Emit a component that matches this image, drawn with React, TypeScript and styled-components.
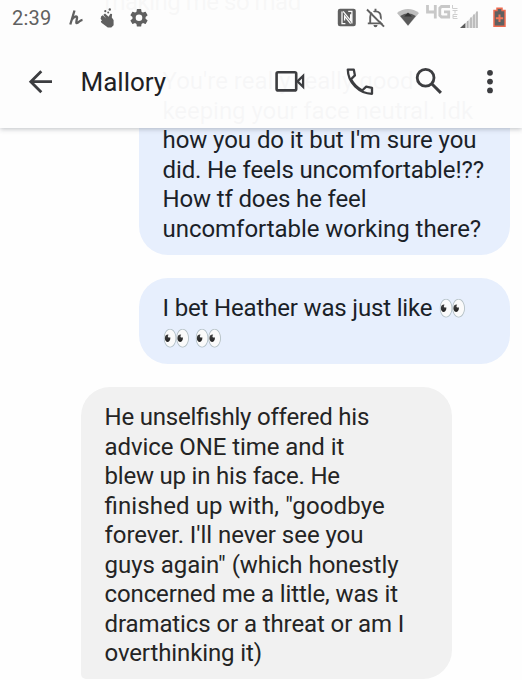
import React from 'react';
import styled, { createGlobalStyle } from 'styled-components';

const GlobalStyle = createGlobalStyle`
  *, *::before, *::after { box-sizing: border-box; }
  body { margin: 0; background: #fefefe; font-family: Roboto, sans-serif; }
`;

const Screen = styled.main`
  position: relative;
  width: 522px;
  height: 680px;
  overflow: hidden;
  background: #fefefe;
`;

const TopBar = styled.header`
  position: absolute;
  inset: 0 0 auto 0;
  height: 127.5px;
  background: rgba(253, 253, 253, 0.972);
  box-shadow: 0 1px 5px rgba(40, 45, 60, 0.3);
`;

const StatusBar = styled.div`
  display: flex;
  justify-content: space-between;
  height: 36px;
  padding: 0 16.5px 0 12px;
  color: #606060;
`;

const StatusGroup = styled.div`
  display: flex;
  align-items: center;
`;

const Clock = styled.time`
  width: 55px;
  font-size: 20px;
  letter-spacing: 0.2px;
  line-height: 36px;
`;

const StatusIcon = styled.svg<{ $w: number; $gap?: number }>`
  display: block;
  width: ${p => p.$w}px;
  height: 36px;
  margin-left: ${p => p.$gap ?? 0}px;
  fill: currentColor;
  overflow: visible;
`;

const AppBar = styled.div`
  display: flex;
  align-items: center;
  height: 91px;
  padding: 0 14px 0 22px;
  color: #3c3d40;
`;

const Title = styled.h1`
  flex: 1;
  margin: 0 0 0 22.5px;
  font-size: 26px;
  font-weight: 400;
  letter-spacing: 0;
  line-height: 36px;
  color: #202124;
`;

const IconButton = styled.button`
  width: 36px;
  height: 36px;
  padding: 0;
  border: 0;
  background: none;
  color: inherit;
`;

const Actions = styled.div`
  display: grid;
  grid-template-columns: 70px 69px 61px 36px;
`;

const Glyph = styled.svg`
  display: block;
  width: 36px;
  height: 36px;
  fill: none;
  stroke: currentColor;
  stroke-width: 2.8;
`;

const Conversation = styled.section`
  display: flex;
  flex-direction: column;
  gap: 23.6px;
  margin-top: -28px;
  padding: 0 12px 0 81px;
`;

const Bubble = styled.article<{ $sent?: boolean }>`
  flex: none;
  width: 371px;
  align-self: ${p => (p.$sent ? 'flex-end' : 'flex-start')};
  padding: 16px 0 10.4px 23.5px;
  border-radius: ${p => (p.$sent ? '29px' : '29px 29px 29px 5px')};
  background: ${p => (p.$sent ? '#e7effd' : '#f1f1f1')};
  color: ${p => (p.$sent ? '#1b1f28' : '#242424')};
`;

const Line = styled.span<{ $track?: number }>`
  display: block;
  height: 29.5px;
  font-size: 24px;
  line-height: 29.5px;
  white-space: pre;
  letter-spacing: ${p => p.$track ?? 0}px;
  font-feature-settings: 'liga' 1;
`;

const Emoji = styled.span`
  display: inline-block;
  width: 26px;
  margin-right: 5.5px;
  font-family: 'Noto Color Emoji', sans-serif;
  font-size: 23px;
  line-height: 1;
  letter-spacing: 0;
`;

type TextLine = { text: string; track?: number; eyes?: number };
type Message = { sent?: boolean; lines: TextLine[] };

const messages: Message[] = [
  { lines: [{ text: 'making me so mad', track: -0.5 }] },
  {
    sent: true,
    lines: [
      { text: "You're really really good" },
      { text: 'keeping your face neutral. Idk', track: -0.06 },
      { text: "how you do it but I'm sure you", track: -0.07 },
      { text: 'did. He feels uncomfortable!??', track: -0.12 },
      { text: 'How tf does he feel', track: -0.14 },
      { text: 'uncomfortable working there?', track: -0.04 },
    ],
  },
  {
    sent: true,
    lines: [
      { text: 'I bet Heather was just like ', track: -0.16, eyes: 1 },
      { text: '', eyes: 2 },
    ],
  },
  {
    lines: [
      { text: 'He unselfishly offered his', track: -0.2 },
      { text: 'advice ONE time and it', track: -0.08 },
      { text: 'blew up in his face. He', track: -0.2 },
      { text: 'finished up with, "goodbye', track: 0.13 },
      { text: "forever. I'll never see you", track: -0.04 },
      { text: 'guys again" (which honestly', track: -0.03 },
      { text: 'concerned me a little, was it', track: -0.12 },
      { text: 'dramatics or a threat or am I', track: -0.1 },
      { text: 'overthinking it)', track: -0.12 },
    ],
  },
];

function LeftStatus() {
  return (
    <StatusGroup>
      <Clock>2:39</Clock>
      <StatusIcon $w={16} $gap={1} viewBox="0 0 16 36">
        <path d="M6.5 10.5 2.3 24.5M3.5 20.2C5.5 16.5 9.8 14.8 9 18.3 8.2 22 7.6 24.2 10 22.6 11.6 21.5 12 20.2 14.5 19.8" fill="none" stroke="currentColor" strokeWidth="2.3" />
      </StatusIcon>
      <StatusIcon $w={15} $gap={16} viewBox="0 0 15 36">
        <path d="M1.2 16.2 2.8 15.2 6.1 18.4 3.4 14.7 5 13.4 8.6 16.8 10.3 13.8 12.1 14.1 11.8 17.5 13.6 20.1V25.3L11.3 27.5H7.8L1.4 22.8.8 21.2 2 20.4.6 18.7Z" />
        <circle cx="5.3" cy="11.2" r="1.1" /><circle cx="8.2" cy="12.6" r="1" /><circle cx="9.8" cy="9.5" r="1.2" />
      </StatusIcon>
      <StatusIcon $w={22} $gap={12.5} viewBox="0 -7.4 24 39.2">
        <path d="M19.14 12.94c.04-.3.06-.61.06-.94s-.02-.64-.07-.94l2.03-1.58a.49.49 0 0 0 .12-.61l-1.92-3.32a.49.49 0 0 0-.59-.22l-2.39.96a7 7 0 0 0-1.62-.94l-.36-2.54a.48.48 0 0 0-.48-.41h-3.84a.48.48 0 0 0-.47.41l-.36 2.54c-.59.24-1.13.57-1.62.94l-2.39-.96a.48.48 0 0 0-.59.22L2.74 8.87a.48.48 0 0 0 .12.61l2.03 1.58a7.5 7.5 0 0 0 0 1.88l-2.03 1.58a.49.49 0 0 0-.12.61l1.92 3.32c.12.22.37.29.59.22l2.39-.96c.5.38 1.03.7 1.62.94l.36 2.54c.05.24.24.41.48.41h3.84c.24 0 .44-.17.47-.41l.36-2.54c.59-.24 1.13-.56 1.62-.94l2.39.96c.22.08.47 0 .59-.22l1.92-3.32a.48.48 0 0 0-.12-.61zM12 15.6a3.6 3.6 0 1 1 0-7.2 3.6 3.6 0 0 1 0 7.2z" />
      </StatusIcon>
    </StatusGroup>
  );
}

function RightStatus() {
  return (
    <StatusGroup>
      <StatusIcon $w={18} viewBox="0 0 18 36">
        <rect x="-.2" y="8.7" width="18" height="17.6" rx="2.2" />
        <path d="M7.4 23.6H4V11.4M5.2 11.4 12.6 20.6V14.2M10.2 11.4H13.9V23.6M12.6 23.6 6.6 16V20.6" fill="none" stroke="#fdfdfd" strokeWidth="1.25" />
      </StatusIcon>
      <StatusIcon $w={19} $gap={9.5} viewBox="0 0 19 36">
        <path d="M4.2 23.2V17C4.2 13.3 6.4 11.4 9.5 11.4S14.8 13.3 14.8 17V23.2M1.8 23.4H17M9.5 8.7V12" fill="none" stroke="currentColor" strokeWidth="1.9" />
        <path d="M7.4 25H11.6Q11.3 27.2 9.5 27.2T7.4 25" />
        <path d="M3 8.5 19.2 24.9" stroke="#fff" strokeWidth="1.8" />
        <path d="M1 9.5 18 26.7" stroke="currentColor" strokeWidth="1.9" />
      </StatusIcon>
      <StatusIcon $w={22} $gap={12.5} viewBox="0 0 22 36">
        <path d="M0 13C6.5 7.7 15.5 7.7 22 13L11 26Z" fill="#bebebe" />
        <path d="M3.2 16Q11 10.6 18.8 16L11 25.6Z" fill="#5a5a5a" />
        <path d="m7.2 16.5 3.8-4 3.8 4Z" fill="#333" />
      </StatusIcon>
      <StatusIcon $w={52} $gap={6.5} viewBox="0 0 52 36">
        <path d="M1.5 5V12H10M9.3 5V18.5M24 6.5H15.5L13.8 8.2V15.3L15.5 17H22.7V11.8H18" fill="none" stroke="#c8c8c8" strokeWidth="2.8" />
        <path d="M26.5 5V8.5H31.5M26.5 10.5H31.5M29 10.5V13.5M31.5 14.5H27V18.5H31.5M27 16.5H31" fill="none" stroke="#cecece" strokeWidth="1" />
        <path d="M34.5 28 51.5 11V28Z" fill="#dedede" />
        <path d="M34 28 39.3 23V28Z" fill="#5b5b5b" />
        <path d="M41.7 21V28M45 17.6V28M48 14.6V28M51 11.6V28" stroke="#b2b2b2" strokeWidth="1.5" />
      </StatusIcon>
      <StatusIcon $w={13} $gap={15} viewBox="0 0 13 36">
        <path d="M4 8.3H9V10.6H12V26.2H1V10.6H4Z" stroke="#ed6b50" strokeWidth="1.5" />
        <path d="M6.5 14.5V22M2.8 18.2H10.2" stroke="#f27659" strokeWidth="2" />
      </StatusIcon>
    </StatusGroup>
  );
}

export default function App() {
  return (
    <Screen>
      <GlobalStyle />
      <Conversation>
        {messages.map((message, i) => (
          <Bubble key={i} $sent={message.sent}>
            {message.lines.map((line, n) => (
              <Line key={n} $track={line.track}>
                {line.text}
                {Array.from({ length: line.eyes ?? 0 }, (_, e) => <Emoji key={e}>👀</Emoji>)}
              </Line>
            ))}
          </Bubble>
        ))}
      </Conversation>
      <TopBar>
        <StatusBar>
          <LeftStatus />
          <RightStatus />
        </StatusBar>
        <AppBar>
          <IconButton aria-label="Back">
            <Glyph viewBox="0 0 36 36"><path d="M30 17.7H9.5M19.3 7.2 8.8 17.7l10.5 10.5" /></Glyph>
          </IconButton>
          <Title>Mallory</Title>
          <Actions>
            <IconButton aria-label="Video call">
              <Glyph viewBox="0 0 36 36">
                <rect x="4.6" y="8.2" width="19.6" height="18.2" rx="1.5" strokeWidth="2.6" />
                <path d="M25.4 17.3 31.1 12V22.8Z" strokeWidth="2.3" />
              </Glyph>
            </IconButton>
            <IconButton aria-label="Call">
              <Glyph viewBox="0 0 36 36">
                <path d="M5.8 5.6H11.8L12.9 11.4 9 15.3C11.9 20.6 15 23.7 20.2 26.5L24.2 22.6 30 23.8V29.8C17.2 29.7 5.9 18.6 5.8 5.6Z" strokeWidth="2.3" strokeLinejoin="round" />
              </Glyph>
            </IconButton>
            <IconButton aria-label="Search">
              <Glyph viewBox="0 0 36 36"><circle cx="14.6" cy="13.8" r="8.4" /><path d="m20.7 19.7 9.2 9.2" strokeWidth="3" /></Glyph>
            </IconButton>
            <IconButton aria-label="More options">
              <Glyph viewBox="0 0 36 36">
                <g fill="currentColor" stroke="none"><circle cx="18" cy="8.8" r="2.9" /><circle cx="18" cy="17.6" r="2.9" /><circle cx="18" cy="26.4" r="2.9" /></g>
              </Glyph>
            </IconButton>
          </Actions>
        </AppBar>
      </TopBar>
    </Screen>
  );
}
